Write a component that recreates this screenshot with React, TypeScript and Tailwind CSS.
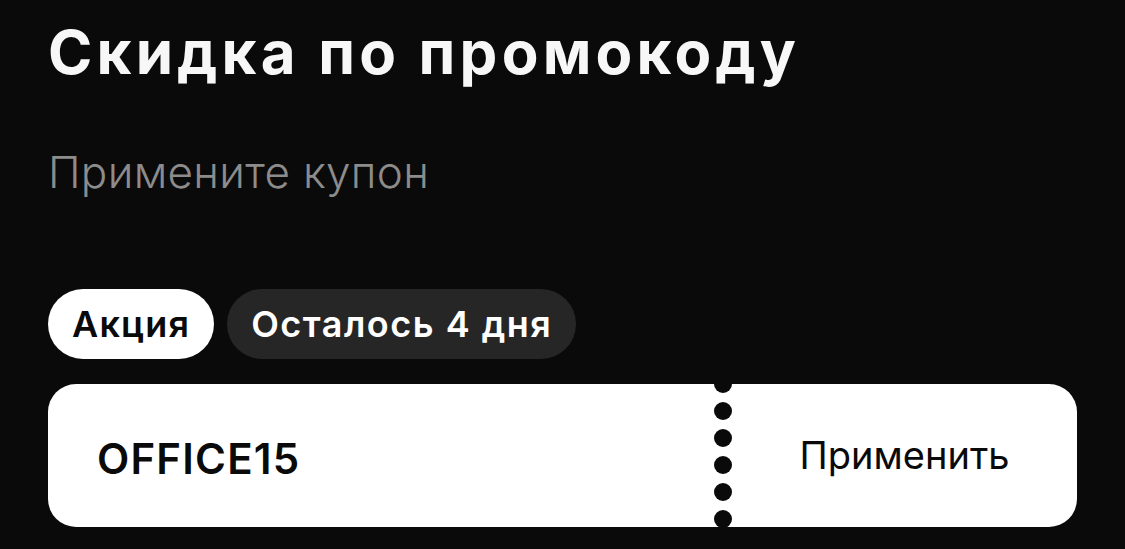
export default function App() {
  const dots = Array.from({ length: 6 });

  return (
    <div
      className="w-[1125px] h-[549px] bg-[#0a0a0a] px-12 pt-[16px] overflow-hidden"
      style={{ fontFamily: "Inter, 'Noto Sans', sans-serif" }}
    >
      <h1 className="text-[60px] leading-[72px] font-bold text-[#f7f7f7] tracking-[4.2px]">
        Скидка по промокоду
      </h1>

      <div className="mt-[58px] text-[44px] leading-[52px] font-light text-[#8c8c8c] tracking-[0.3px]">
        Примените купон
      </div>

      {/* chips */}
      <div className="flex gap-[13px] mt-[91px]">
        <div className="h-[70px] px-6 rounded-full bg-white flex items-center text-[36px] font-semibold text-[#0a0a0a] tracking-[1.2px]">
          Акция
        </div>
        <div className="h-[70px] px-6 rounded-full bg-[#262626] flex items-center text-[36px] font-semibold text-white tracking-[1.5px]">
          Осталось 4 дня
        </div>
      </div>

      {/* coupon */}
      <div className="mt-[25px] h-[143px] rounded-[28px] bg-white flex overflow-hidden">
        <div className="w-[666px] flex items-center pl-[49px] pt-[6px] text-[42px] font-semibold text-[#0a0a0a] tracking-[1.2px]">
          OFFICE15
        </div>
        <div className="w-[18px] flex flex-col gap-[9px] -mt-[9px]">
          {dots.map((_, i) => (
            <div key={i} className="w-[18px] h-[18px] shrink-0 rounded-full bg-[#0a0a0a]" />
          ))}
        </div>
        <div className="flex-1 flex items-center justify-center text-[38px] text-[#0a0a0a]">
          Применить
        </div>
      </div>
    </div>
  );
}
